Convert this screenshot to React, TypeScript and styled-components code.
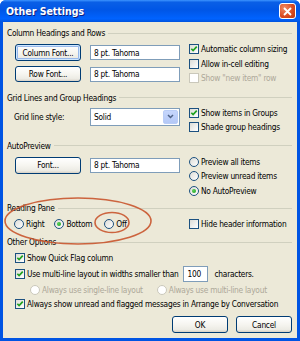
import React from "react";
import styled, { createGlobalStyle, css } from "styled-components";

const Global = createGlobalStyle`
  html, body { margin: 0; padding: 0; width: 300px; height: 341px; overflow: hidden; background: #fff; }
  body { font-family: "DejaVu Sans Condensed", "DejaVu Sans", Tahoma, sans-serif; font-size: 8.3px; letter-spacing: -0.25px; color: #000; }
  * { box-sizing: border-box; }
`;

const Window = styled.div`
  position: relative;
  width: 300px;
  height: 341px;
  display: flex;
  flex-direction: column;
  background: #0054e3;
  border-radius: 6px 6px 0 0;
  overflow: hidden;
`;

const TitleBar = styled.div`
  height: 22px;
  flex: none;
  display: flex;
  align-items: center;
  justify-content: space-between;
  padding: 0 4px 0 6px;
  background: linear-gradient(#3d95ff 0%, #0a5fe6 10%, #0056e6 45%, #0063ff 85%, #0053dd 100%);
`;

const Title = styled.span`
  color: #fff;
  font-weight: bold;
  font-size: 10.5px;
  letter-spacing: 0;
  text-shadow: 1px 1px 0 #0a1e80;
`;

const CloseBtn = styled.span`
  width: 17px;
  height: 16px;
  border: 1px solid #fff;
  border-radius: 3px;
  background: radial-gradient(circle at 30% 30%, #f08a64, #d8491f 60%, #b93a14);
  display: flex;
  align-items: center;
  justify-content: center;
`;

const Body = styled.div`
  flex: 1;
  margin: 0 3px 3px;
  background: #ece9d8;
  padding: 5px 5px 0 4px;
  display: flex;
  flex-direction: column;
`;

const GroupHeader = styled.div<{ $mt?: number }>`
  height: 12px;
  display: flex;
  align-items: center;
  gap: 3px;
  margin-top: ${(p) => p.$mt ?? 0}px;
  white-space: nowrap;
  &::after {
    content: "";
    flex: 1;
    border-top: 1px solid #d0d0bf;
  }
`;

const Section = styled.div<{ $mt?: number; $pl?: number }>`
  display: flex;
  align-items: flex-start;
  gap: 9px;
  margin-top: ${(p) => p.$mt ?? 0}px;
  padding-left: ${(p) => p.$pl ?? 8}px;
`;

const LeftCol = styled.div<{ $pt?: number; $gap?: number; $w?: number }>`
  width: ${(p) => p.$w ?? 165}px;
  flex: none;
  display: flex;
  flex-direction: column;
  gap: ${(p) => p.$gap ?? 5}px;
  padding-top: ${(p) => p.$pt ?? 0}px;
`;

const RightCol = styled.div`
  display: flex;
  flex-direction: column;
`;

const FieldRow = styled.div<{ $gap?: number }>`
  display: flex;
  align-items: center;
  gap: ${(p) => p.$gap ?? 9}px;
`;

const Button = styled.button<{ $w?: number; $h?: number; $def?: boolean }>`
  width: ${(p) => p.$w ?? 66}px;
  height: ${(p) => p.$h ?? 17}px;
  flex: none;
  padding: 0;
  font: inherit;
  letter-spacing: inherit;
  color: #000;
  border: 1px solid #003c74;
  border-radius: 3px;
  background: linear-gradient(#ffffff 0%, #f6f5f0 50%, #ecebe4 85%, #d6d0c5 100%);
  ${(p) =>
    p.$def &&
    css`
      box-shadow: inset 0 0 0 1px #cee7ff, inset 0 0 0 2px #98b8ea;
    `}
`;

const TextBox = styled.div<{ $w?: number; $h?: number }>`
  width: ${(p) => p.$w ?? 90}px;
  height: ${(p) => p.$h ?? 15}px;
  flex: none;
  background: #fff;
  border: 1px solid #7f9db9;
  display: flex;
  align-items: center;
  padding-left: 3px;
`;

const SelectBox = styled(TextBox)`
  justify-content: space-between;
  padding-right: 1px;
`;

const DropBtn = styled.span`
  width: 15px;
  height: 14px;
  border-radius: 2px;
  background: linear-gradient(#c6d6fc, #b4c8f6);
  border: 1px solid #b9cdf7;
  display: flex;
  align-items: center;
  justify-content: center;
`;

const Label = styled.span<{ $w?: number }>`
  width: ${(p) => (p.$w ? `${p.$w}px` : "auto")};
  flex: none;
`;

const OptRow = styled.label<{ $h?: number; $disabled?: boolean; $ml?: number }>`
  height: ${(p) => p.$h ?? 14.5}px;
  display: flex;
  align-items: center;
  gap: 2px;
  white-space: nowrap;
  margin-left: ${(p) => p.$ml ?? 0}px;
  color: ${(p) => (p.$disabled ? "#aca899" : "#000")};
`;

const Box = styled.span<{ $disabled?: boolean }>`
  width: 10px;
  height: 10px;
  flex: none;
  border: 1px solid ${(p) => (p.$disabled ? "#cac8bb" : "#1c5180")};
  background: ${(p) => (p.$disabled ? "#fff" : "linear-gradient(135deg, #dcdcd7, #ffffff)")};
  display: flex;
  align-items: center;
  justify-content: center;
`;

const Round = styled(Box)`
  border-radius: 50%;
`;

const Dot = styled.span`
  width: 4px;
  height: 4px;
  border-radius: 50%;
  background: radial-gradient(circle at 35% 35%, #55d055, #21a121);
`;

const InlineRow = styled.div<{ $h?: number; $pl?: number; $mt?: number; $gap?: number }>`
  height: ${(p) => p.$h ?? 16}px;
  display: flex;
  align-items: center;
  gap: ${(p) => p.$gap ?? 0}px;
  padding-left: ${(p) => p.$pl ?? 8}px;
  margin-top: ${(p) => p.$mt ?? 0}px;
  white-space: nowrap;
`;

const Footer = styled.div`
  display: flex;
  justify-content: flex-end;
  gap: 8px;
  margin-top: 5px;
`;

const Overlay = styled.svg`
  position: absolute;
  left: 0;
  top: 0;
  pointer-events: none;
`;

const Check = () => (
  <svg width="8" height="8" viewBox="0 0 9 9">
    <path d="M1.5 4.2 L3.5 6.3 L7.6 1.8" fill="none" stroke="#21a121" strokeWidth="1.9" />
  </svg>
);

type OptProps = {
  kind: "check" | "radio";
  label: React.ReactNode;
  checked?: boolean;
  disabled?: boolean;
  h?: number;
  ml?: number;
};

const Opt = ({ kind, label, checked, disabled, h, ml }: OptProps) => (
  <OptRow $h={h} $disabled={disabled} $ml={ml}>
    {kind === "check" ? (
      <Box $disabled={disabled}>{checked && <Check />}</Box>
    ) : (
      <Round $disabled={disabled}>{checked && <Dot />}</Round>
    )}
    <span>{label}</span>
  </OptRow>
);

export default function App() {
  return (
    <Window>
      <Global />
      <TitleBar>
        <Title>Other Settings</Title>
        <CloseBtn>
          <svg width="9" height="9" viewBox="0 0 9 9">
            <path d="M1 1 L8 8 M8 1 L1 8" stroke="#fff" strokeWidth="1.8" />
          </svg>
        </CloseBtn>
      </TitleBar>
      <Body>
        <GroupHeader>Column Headings and Rows</GroupHeader>
        <Section $mt={3}>
          <LeftCol $pt={2}>
            <FieldRow>
              <Button $def>Column Font...</Button>
              <TextBox>8 pt. Tahoma</TextBox>
            </FieldRow>
            <FieldRow>
              <Button $h={16}>Row Font...</Button>
              <TextBox>8 pt. Tahoma</TextBox>
            </FieldRow>
          </LeftCol>
          <RightCol>
            <Opt kind="check" checked label="Automatic column sizing" />
            <Opt kind="check" label="Allow in-cell editing" />
            <Opt kind="check" disabled label={'Show "new item" row'} />
          </RightCol>
        </Section>

        <GroupHeader $mt={6}>Grid Lines and Group Headings</GroupHeader>
        <Section $mt={2} $pl={7}>
          <LeftCol $pt={2} $w={166}>
            <FieldRow>
              <Label $w={67}>Grid line style:</Label>
              <SelectBox $h={18}>
                Solid
                <DropBtn>
                  <svg width="7" height="5" viewBox="0 0 7 5">
                    <path d="M1 1 L3.5 3.5 L6 1" fill="none" stroke="#4d6185" strokeWidth="1.5" />
                  </svg>
                </DropBtn>
              </SelectBox>
            </FieldRow>
          </LeftCol>
          <RightCol>
            <Opt kind="check" checked label="Show items in Groups" />
            <Opt kind="check" label="Shade group headings" />
          </RightCol>
        </Section>

        <GroupHeader $mt={5}>AutoPreview</GroupHeader>
        <Section $mt={3}>
          <LeftCol $pt={2}>
            <FieldRow>
              <Button>Font...</Button>
              <TextBox>8 pt. Tahoma</TextBox>
            </FieldRow>
          </LeftCol>
          <RightCol>
            <Opt kind="radio" label="Preview all items" />
            <Opt kind="radio" label="Preview unread items" />
            <Opt kind="radio" checked label="No AutoPreview" />
          </RightCol>
        </Section>

        <GroupHeader $mt={4}>Reading Pane</GroupHeader>
        <Section $mt={3} $pl={7}>
          <LeftCol $w={166}>
            <FieldRow $gap={10}>
              <Opt kind="radio" label="Right" h={14} />
              <Opt kind="radio" checked label="Bottom" h={14} />
              <Opt kind="radio" label="Off" h={14} ml={2} />
            </FieldRow>
          </LeftCol>
          <RightCol>
            <Opt kind="check" label="Hide header information" h={14} />
          </RightCol>
        </Section>

        <GroupHeader $mt={5}>Other Options</GroupHeader>
        <InlineRow $mt={2}>
          <Opt kind="check" checked label="Show Quick Flag column" h={16} />
        </InlineRow>
        <InlineRow>
          <Opt kind="check" checked label="Use multi-line layout in widths smaller than" h={16} />
          <TextBox $w={25} $h={16} style={{ marginLeft: 5, marginRight: 6 }}>100</TextBox>
          <span>characters.</span>
        </InlineRow>
        <InlineRow $pl={23} $gap={14}>
          <Opt kind="radio" disabled label="Always use single-line layout" h={16} />
          <Opt kind="radio" disabled label="Always use multi-line layout" h={16} />
        </InlineRow>
        <InlineRow $h={14} $mt={-1}>
          <Opt kind="check" checked label="Always show unread and flagged messages in Arrange by Conversation" h={14} />
        </InlineRow>

        <Footer>
          <Button $w={56}>OK</Button>
          <Button $w={56}>Cancel</Button>
        </Footer>
      </Body>
      <Overlay width="300" height="341" viewBox="0 0 300 341">
        <ellipse cx="78" cy="221" rx="73" ry="23" fill="none" stroke="#c9552e" strokeWidth="1.6" opacity="0.9" />
        <ellipse cx="112" cy="222.5" rx="17" ry="10" fill="none" stroke="#c9552e" strokeWidth="1.6" opacity="0.9" />
      </Overlay>
    </Window>
  );
}
